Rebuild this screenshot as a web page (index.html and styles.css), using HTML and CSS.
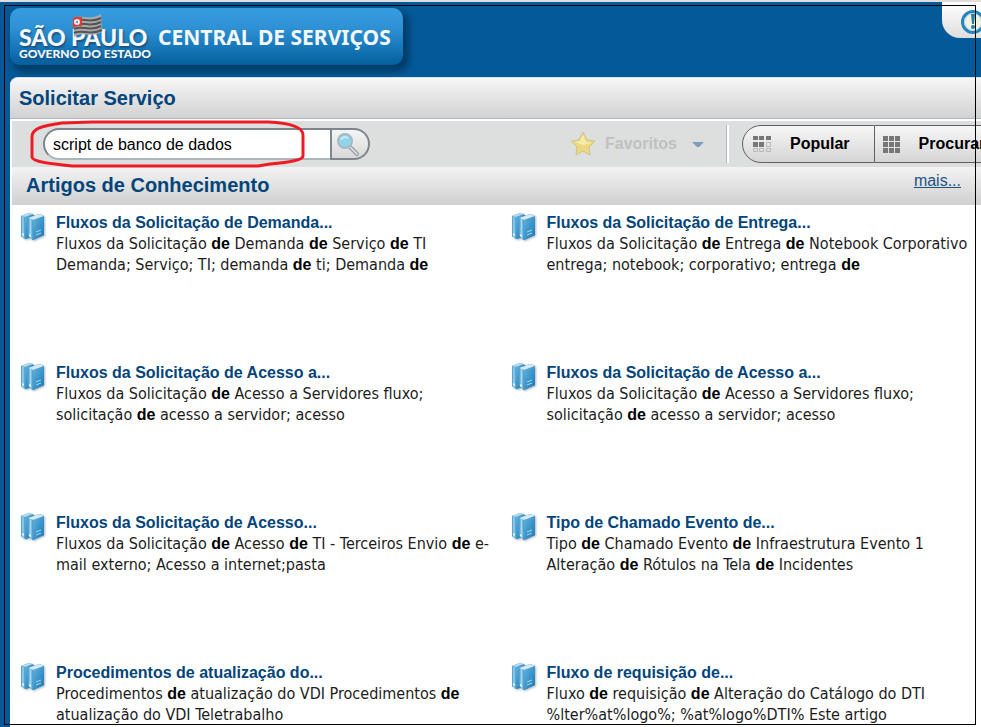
FILE: index.html
```html
<!DOCTYPE html>
<html lang="pt-BR">
<head>
<meta charset="utf-8">
<title>Central de Serviços</title>
<link rel="stylesheet" href="styles.css">
</head>
<body>
<svg class="defs" aria-hidden="true">
  <defs>
    <linearGradient id="cover" x1="0" y1="0" x2="1" y2="1">
      <stop offset="0" stop-color="#5fb4e0"/><stop offset="1" stop-color="#1b78b5"/>
    </linearGradient>
    <linearGradient id="spine" x1="0" y1="0" x2="1" y2="0">
      <stop offset="0" stop-color="#3f98ca"/><stop offset="0.5" stop-color="#a5d3ea"/><stop offset="1" stop-color="#3d96ca"/>
    </linearGradient>
    <symbol id="books" viewBox="0 0 26 30">
      <path d="M1 4 9 1l5 2v21l-8 3-5-3z" fill="#2a82b8"/>
      <path d="M1 4l4 1v22l-4-3z" fill="url(#spine)"/>
      <path d="M5 5l8-3v22l-8 3z" fill="url(#cover)"/>
      <path d="M1 4 9 1l4 1-8 3z" fill="#b9dcec"/>
      <path d="M8 6 19 2l5 2v19l-11 5-5-4z" fill="#2378b0"/>
      <path d="M8 6l5 2v20l-5-4z" fill="url(#spine)"/>
      <path d="M13 8l11-4v19l-11 5z" fill="url(#cover)"/>
      <path d="M8 6 19 2l5 2-11 4z" fill="#d5e9f2"/>
      <path d="M16 20l5-2M16 23l5-2" stroke="#a5d7ee" stroke-width="1"/>
      <path d="M2 21l2 1v2l-2-1zM9 22l2 1v2l-2-1z" fill="#e5f5fb"/>
    </symbol>
  </defs>
</svg>

<header class="banner">
  <div class="brand">
    <div class="logo">
      <span class="logo-name">SÃO PAULO</span>
      <span class="logo-sub">GOVERNO DO ESTADO</span>
      <svg class="flag" viewBox="0 0 32 24" aria-hidden="true">
        <path d="M2 4C9 0 18 7 30 0l1 18C20 24 12 17 3 23z" fill="#aaa"/>
        <path d="M3 7c8-4 16 3 27-3M3 11c8-4 16 3 27-3M3 15c8-4 16 3 27-3M3 19c8-4 16 3 28-3" fill="none" stroke="#555" stroke-width="2"/>
        <path d="M2 4c4-2 6-1 9-1v9c-3 0-6 0-9 2z" fill="#e33b32"/>
        <circle cx="6" cy="8" r="3" fill="#eee"/><circle cx="6" cy="8" r="1" fill="#377bb7"/>
      </svg>
    </div>
    <span class="brand-title">CENTRAL DE SERVIÇOS</span>
  </div>
  <button class="alert" aria-label="Avisos">
    <svg viewBox="0 0 26 26" aria-hidden="true">
      <circle cx="13" cy="13" r="10.5" fill="#f2f1e2" stroke="#2484bd" stroke-width="3"/>
      <circle cx="13" cy="13" r="8.5" fill="none" stroke="#a5d3dd" stroke-width="1"/>
      <path d="M11 5h4l-1 10h-2z" fill="#23829b"/><circle cx="13" cy="18" r="2" fill="#23829b"/>
    </svg>
  </button>
</header>

<main class="panel">
  <h1 class="panel-title">Solicitar Serviço</h1>
  <div class="content">
    <div class="toolbar">
      <form class="search">
        <input class="search-input" type="text" value="script de banco de dados" aria-label="Pesquisar">
        <button class="search-button" type="button" aria-label="Buscar">
          <svg viewBox="0 0 24 26" aria-hidden="true">
            <path d="M14 16l7 7" stroke="#8c969c" stroke-width="4" stroke-linecap="round"/>
            <path d="M14 16l7 7" stroke="#d4dadd" stroke-width="2" stroke-linecap="round"/>
            <circle cx="9" cy="10" r="7" fill="#8ed5ea" stroke="#a9b8c0" stroke-width="2"/>
            <path d="M5 9c1-3 4-4 7-2" fill="none" stroke="#c4edf6" stroke-width="2"/>
          </svg>
        </button>
        <svg class="marker" viewBox="0 0 276 48" aria-hidden="true">
          <path d="M2 37V17C2 9 10 6 32 3L62 2H238C260 3 273 7 273 15V36C273 40 261 42 240 44L228 46H42C22 44 2 42 2 37z" fill="none" stroke="#ed1c24" stroke-width="3"/>
        </svg>
      </form>
      <div class="actions">
        <button class="favorites" disabled>
          <svg class="star" viewBox="0 0 26 26" aria-hidden="true">
            <path d="M13 1l4 8 8 1-6 6 1 8-7-4-7 4 1-8-6-6 8-1z" fill="#ecd97d" stroke="#cfc489" stroke-width="1" stroke-linejoin="round"/>
            <path d="M13 4l3 7 6 1-9 2-8-3 5-1z" fill="#f6ecae"/>
          </svg>
          Favoritos
          <svg class="arrow" viewBox="0 0 12 7" aria-hidden="true"><path d="M0 1h12L7 6H5z" fill="#7d9db9"/></svg>
        </button>
        <span class="divider"></span>
        <div class="views">
          <button class="view popular">
            <svg viewBox="0 0 18 17" aria-hidden="true">
              <path d="M0 0h5v4H0zM6 0h5v4H6zM13 0h5v4h-5zM0 6h5v5H0zM6 6h5v5H6z" fill="#777779"/>
              <path d="M13.500 6.500h4v4h-4zM.5 12.500h4v3h-4zM6.500 12.500h4v3h-4zM13.500 12.500h4v3h-4z" fill="none" stroke="#b7b7b7"/>
            </svg>
            Popular
          </button>
          <button class="view browse">
            <svg viewBox="0 0 18 17" aria-hidden="true">
              <path d="M0 0h5v5H0zM6 0h5v5H6zM12 0h5v5h-5zM0 6h5v5H0zM6 6h5v5H6zM12 6h5v5h-5zM0 12h5v5H0zM6 12h5v5H6zM12 12h5v5h-5z" fill="#777779"/>
            </svg>
            Procurar
          </button>
        </div>
      </div>
    </div>

    <div class="section-head">
      <h2>Artigos de Conhecimento</h2>
      <a href="#">mais...</a>
    </div>

    <div class="articles">
      <article class="article">
        <svg class="books"><use href="#books"/></svg>
        <div><a href="#">Fluxos da Solicitação de Demanda...</a>
        <p>Fluxos da Solicitação <b>de</b> Demanda <b>de</b> Serviço <b>de</b> TI<br>Demanda; Serviço; TI; demanda <b>de</b> ti; Demanda <b>de</b></p></div>
      </article>
      <article class="article">
        <svg class="books"><use href="#books"/></svg>
        <div><a href="#">Fluxos da Solicitação de Entrega...</a>
        <p>Fluxos da Solicitação <b>de</b> Entrega <b>de</b> Notebook Corporativo<br>entrega; notebook; corporativo; entrega <b>de</b></p></div>
      </article>
      <article class="article">
        <svg class="books"><use href="#books"/></svg>
        <div><a href="#">Fluxos da Solicitação de Acesso a...</a>
        <p>Fluxos da Solicitação <b>de</b> Acesso a Servidores fluxo;<br>solicitação <b>de</b> acesso a servidor; acesso</p></div>
      </article>
      <article class="article">
        <svg class="books"><use href="#books"/></svg>
        <div><a href="#">Fluxos da Solicitação de Acesso a...</a>
        <p>Fluxos da Solicitação <b>de</b> Acesso a Servidores fluxo;<br>solicitação <b>de</b> acesso a servidor; acesso</p></div>
      </article>
      <article class="article">
        <svg class="books"><use href="#books"/></svg>
        <div><a href="#">Fluxos da Solicitação de Acesso...</a>
        <p>Fluxos da Solicitação <b>de</b> Acesso <b>de</b> TI - Terceiros Envio <b>de</b> e-<br>mail externo; Acesso a internet;pasta</p></div>
      </article>
      <article class="article">
        <svg class="books"><use href="#books"/></svg>
        <div><a href="#">Tipo de Chamado Evento de...</a>
        <p>Tipo <b>de</b> Chamado Evento <b>de</b> Infraestrutura Evento 1<br>Alteração <b>de</b> Rótulos na Tela <b>de</b> Incidentes</p></div>
      </article>
      <article class="article">
        <svg class="books"><use href="#books"/></svg>
        <div><a href="#">Procedimentos de atualização do...</a>
        <p>Procedimentos <b>de</b> atualização do VDI Procedimentos <b>de</b><br>atualização do VDI Teletrabalho</p></div>
      </article>
      <article class="article">
        <svg class="books"><use href="#books"/></svg>
        <div><a href="#">Fluxo de requisição de...</a>
        <p>Fluxo <b>de</b> requisição <b>de</b> Alteração do Catálogo do DTI<br>%lter%at%logo%; %at%logo%DTI% Este artigo</p></div>
      </article>
    </div>
  </div>
</main>
<div class="frame"></div>
</body>
</html>
```
FILE: styles.css
```css
* { box-sizing: border-box; }

body {
  display: flex;
  flex-direction: column;
  height: 100vh;
  margin: 0;
  overflow: hidden;
  border-top: 2px solid #dcdedf;
  background: #045a99;
  font-family: "Liberation Sans", Arial, sans-serif;
  font-size: 16px;
  color: #000;
}

button { font: inherit; color: inherit; cursor: pointer; }
.defs { position: absolute; width: 0; height: 0; }

.frame {
  position: absolute;
  inset: 5px 5px 2px 4px;
  border: 1px solid #000;
  pointer-events: none;
}

.banner {
  display: flex;
  flex: none;
  justify-content: space-between;
  align-items: flex-start;
  height: 75px;
  padding-left: 10px;
}

.brand {
  display: flex;
  align-items: center;
  gap: 7px;
  height: 57px;
  margin-top: 6px;
  padding: 0 12px 0 9px;
  border-radius: 10px;
  background: linear-gradient(#369ce0, #2e91d4 35%, #03609f);
  box-shadow: 4px 5px 7px 2px #023c68;
  color: #f4f8fc;
}

.logo {
  position: relative;
  display: flex;
  flex-direction: column;
  padding-top: 12px;
  font-family: Lato, sans-serif;
  font-weight: 900;
  text-shadow: 1px 2px 2px #1c4f7c;
  white-space: nowrap;
}
.logo-name { font-size: 23px; line-height: 22px; }
.logo-sub { font-size: 12px; line-height: 12px; }
.flag { position: absolute; left: 52px; top: 0; width: 32px; height: 24px; }

.brand-title {
  font-family: "Noto Sans", sans-serif;
  font-size: 21px;
  font-weight: bold;
  white-space: nowrap;
}

.alert {
  width: 39px;
  height: 36px;
  padding: 4px 0 0 18px;
  border: 0;
  border-radius: 0 0 0 18px;
  background: linear-gradient(#fff, #dedede);
  overflow: hidden;
}
.alert svg { display: block; width: 26px; height: 26px; }

.panel {
  flex: 1;
  min-height: 0;
  margin-left: 10px;
  border-top: 1px solid #cfe0ea;
  border-radius: 8px 0 0 0;
  background: #fff;
  overflow: hidden;
}

.panel-title {
  height: 41px;
  margin: 0;
  padding-left: 9px;
  border-top: 1px solid #fff;
  border-bottom: 1px solid #a9b9c4;
  background: linear-gradient(#f5f5f5, #d2d2d2);
  font-size: 20px;
  line-height: 38px;
  color: #03457a;
}

.content { padding: 2px 0 0 2px; }

.toolbar {
  display: flex;
  justify-content: space-between;
  align-items: center;
  height: 46px;
  padding-left: 31px;
  background: #dcdfde;
}

.search {
  position: relative;
  display: flex;
  width: 327px;
  height: 32px;
}
.search-input {
  flex: 1;
  min-width: 0;
  padding: 2px 8px 0;
  border: 2px solid #7d868c;
  border-width: 2px 0 2px 2px;
  border-radius: 16px 0 0 16px;
  border-bottom-color: #abb6bc;
  background: #fff;
  font: inherit;
  color: #000;
}
.search-button {
  width: 40px;
  padding: 0 4px;
  border: 2px solid #7d868c;
  border-radius: 0 16px 16px 0;
  background: linear-gradient(#f5f5f5, #d9d9d9);
}
.search-button svg { display: block; width: 24px; height: 26px; }
.marker { position: absolute; left: -13px; top: -8px; width: 276px; height: 48px; pointer-events: none; }

.actions { display: flex; align-items: center; width: 411px; }
.favorites {
  display: flex;
  align-items: center;
  gap: 9px;
  padding: 0;
  border: 0;
  background: none;
  font-weight: bold;
  color: #bfc1c0;
}
.star { width: 26px; height: 26px; }
.arrow { width: 12px; height: 7px; margin-left: 6px; }
.divider {
  width: 3px;
  height: 38px;
  margin: 0 13px 0 22px;
  border-left: 1px solid #a9b9c4;
  background: #fff;
  flex: none;
}

.views { display: flex; height: 38px; }
.view {
  display: flex;
  flex: none;
  align-items: center;
  border: 1px solid #606060;
  background: linear-gradient(#f7f7f7, #d5d5d5);
  font-weight: bold;
}
.view svg { width: 18px; height: 17px; }
.popular { gap: 19px; padding: 0 24px 0 10px; border-radius: 19px 0 0 19px; }
.browse { gap: 18px; padding: 0 24px 0 8px; border-left: 0; border-radius: 0 19px 19px 0; }

.section-head {
  display: flex;
  justify-content: space-between;
  height: 38px;
  padding: 0 20px 0 14px;
  background: linear-gradient(#f3f3f3, #d0d0d0);
}
.section-head h2 { margin: 0; font-size: 20px; line-height: 36px; color: #03457a; }
.section-head a { font-size: 16px; line-height: 28px; color: #1c5384; }

.articles {
  display: grid;
  grid-template-columns: 1fr 1fr;
  grid-auto-rows: 150px;
  column-gap: 12px;
  padding-top: 7px;
}
.article { display: flex; gap: 10px; min-width: 0; padding-left: 8px; white-space: nowrap; }
.books { flex: none; width: 26px; height: 30px; filter: drop-shadow(1px 1px 1px #a8b4bb); }
.article a { display: block; font-size: 16px; line-height: 21px; font-weight: bold; color: #03457a; text-decoration: none; }
.article p { margin: 0; font-family: "DejaVu Sans Condensed", "DejaVu Sans", sans-serif; font-size: 16px; line-height: 21px; color: #1c1c1c; }
.article b { font-family: "Liberation Sans", Arial, sans-serif; color: #000; }
```
